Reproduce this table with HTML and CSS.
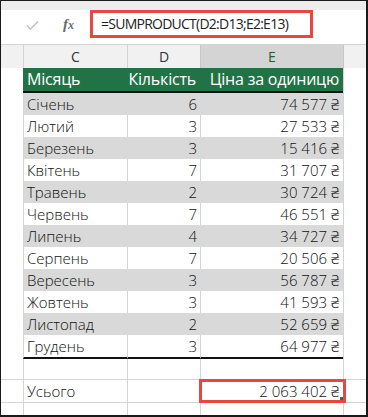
FILE: index.html
```html
<!DOCTYPE html>
<html lang="uk">
<head>
<meta charset="utf-8">
<title>SUMPRODUCT</title>
<link rel="stylesheet" href="styles.css">
</head>
<body>
<div class="sheet">
  <div class="topstrip"></div>
  <div class="fbar">
    <div class="btns">
      <svg class="check" width="13" height="10" viewBox="0 0 13 10"><path d="M1 5.5 L4.5 9 L12 1.5" fill="none" stroke="#c3c3c3" stroke-width="1.6"/></svg>
      <span class="fx">f<span class="x">x</span></span>
    </div>
    <div class="formula">=SUMPRODUCT(D2:D13;E2:E13)</div>
  </div>
  <div class="row colhead">
    <div class="c b"></div>
    <div class="c">C</div>
    <div class="c">D</div>
    <div class="c sel">E</div>
    <div class="c f"></div>
  </div>
  <div class="row thead">
    <div class="c b"></div>
    <div class="c g l">Місяць</div>
    <div class="c g r">Кількість</div>
    <div class="c g r">Ціна за одиницю</div>
    <div class="c f"></div>
  </div>
  <div class="rows">
    <div class="row d band"><div class="c b"></div><div class="c l">Січень</div><div class="c r">6</div><div class="c r">74 577 ₴</div><div class="c f"></div></div>
    <div class="row d"><div class="c b"></div><div class="c l">Лютий</div><div class="c r">3</div><div class="c r">27 533 ₴</div><div class="c f"></div></div>
    <div class="row d band"><div class="c b"></div><div class="c l">Березень</div><div class="c r">3</div><div class="c r">15 416 ₴</div><div class="c f"></div></div>
    <div class="row d"><div class="c b"></div><div class="c l">Квітень</div><div class="c r">7</div><div class="c r">31 707 ₴</div><div class="c f"></div></div>
    <div class="row d band"><div class="c b"></div><div class="c l">Травень</div><div class="c r">2</div><div class="c r">30 724 ₴</div><div class="c f"></div></div>
    <div class="row d"><div class="c b"></div><div class="c l">Червень</div><div class="c r">7</div><div class="c r">46 551 ₴</div><div class="c f"></div></div>
    <div class="row d band"><div class="c b"></div><div class="c l">Липень</div><div class="c r">4</div><div class="c r">34 727 ₴</div><div class="c f"></div></div>
    <div class="row d"><div class="c b"></div><div class="c l">Серпень</div><div class="c r">7</div><div class="c r">20 506 ₴</div><div class="c f"></div></div>
    <div class="row d band"><div class="c b"></div><div class="c l">Вересень</div><div class="c r">3</div><div class="c r">56 787 ₴</div><div class="c f"></div></div>
    <div class="row d"><div class="c b"></div><div class="c l">Жовтень</div><div class="c r">3</div><div class="c r">41 593 ₴</div><div class="c f"></div></div>
    <div class="row d band"><div class="c b"></div><div class="c l">Листопад</div><div class="c r">2</div><div class="c r">52 659 ₴</div><div class="c f"></div></div>
    <div class="row d last"><div class="c b"></div><div class="c l">Грудень</div><div class="c r">3</div><div class="c r">64 977 ₴</div><div class="c f"></div></div>
  </div>
  <div class="row e empty"><div class="c b"></div><div class="c"></div><div class="c"></div><div class="c"></div><div class="c f"></div></div>
  <div class="row e total"><div class="c b"></div><div class="c l">Усього</div><div class="c"></div><div class="c r picked">2 063 402 ₴<span class="handle"></span></div><div class="c f"></div></div>
  <div class="row e tail"><div class="c b"></div><div class="c"></div><div class="c"></div><div class="c"></div><div class="c f"></div></div>
</div>
</body>
</html>
```
FILE: styles.css
```css
html, body {
  margin: 0;
  padding: 0;
  background: #fff;
}
.sheet {
  width: 368px;
  height: 417px;
  box-sizing: border-box;
  border-top: 1px solid #1a1a1a;
  border-left: 1px solid #1a1a1a;
  border-right: 2px solid #1a1a1a;
  border-bottom: 2px solid #1a1a1a;
  overflow: hidden;
  font-family: "Open Sans", "Noto Sans", sans-serif;
  font-weight: 300;
  color: #111;
  display: flex;
  flex-direction: column;
}
.topstrip {
  height: 9px;
  background: #ededed;
}
.fbar {
  height: 35px;
  background: #fff;
  display: flex;
  align-items: flex-start;
  border-bottom: 1px solid #d4d4d4;
  box-sizing: border-box;
}
.btns {
  width: 89px;
  height: 34px;
  display: flex;
  align-items: center;
  padding-bottom: 6px;
  box-sizing: border-box;
}
.check {
  margin-left: 25px;
  margin-top: 2px;
}
.fx {
  margin-left: 24px;
  font-family: "Liberation Serif", serif;
  font-style: italic;
  font-weight: bold;
  font-size: 15px;
  color: #6a6a6a;
}
.fx .x {
  font-size: 12px;
}
.formula {
  width: 223px;
  height: 28px;
  box-sizing: border-box;
  border: 3px solid #e8473f;
  padding-left: 8px;
  font-size: 14px;
  font-weight: 400;
  line-height: 22px;
  letter-spacing: -0.75px;
  color: #222;
  white-space: nowrap;
}
.row {
  display: grid;
  grid-template-columns: 22px 104px 73px 143px 1fr;
}
.c {
  box-sizing: border-box;
  border-left: 1px solid #d4d4d4;
  white-space: nowrap;
  overflow: hidden;
}
.c.b {
  border-left: none;
}
.colhead {
  height: 23px;
  background: #f1f1f1;
}
.colhead .c {
  text-align: center;
  font-size: 14px;
  font-weight: 400;
  line-height: 23px;
  color: #333;
}
.colhead .c.sel {
  background: #d4d4d4;
  color: #1f5e3b;
  border-left-color: #c6c6c6;
}
.colhead .c.f {
  border-left-color: #c6c6c6;
}
.thead {
  height: 25px;
}
.thead .c.g {
  background: #217346;
  color: #fff;
  border-left: none;
  border-bottom: 2px solid #111;
  font-size: 16px;
  font-weight: 400;
  line-height: 23px;
  letter-spacing: -0.2px;
}
.thead .c.b, .thead .c.f {
  border-bottom: none;
}
.l {
  text-align: left;
  padding-left: 3px;
}
.thead .l {
  padding-left: 4px;
}
.r {
  text-align: right;
  padding-right: 4px;
}
.thead .r {
  padding-right: 4px;
}
.d {
  height: 22px;
}
.d .c {
  font-size: 15px;
  line-height: 22px;
}
.d .c.r:nth-child(3) {
  padding-right: 3px;
}
.band .c:nth-child(2), .band .c:nth-child(3), .band .c:nth-child(4) {
  background: #d9d9d9;
  border-left-color: #d9d9d9;
}
.band .c:nth-child(2) {
  border-left-color: #d4d4d4;
}
.last .c:nth-child(2), .last .c:nth-child(3), .last .c:nth-child(4) {
  border-bottom: 2px solid #111;
}
.last {
  height: 24px;
}
.last .c {
  line-height: 22px;
}
.e .c {
  border-bottom: 1px solid #d4d4d4;
  font-size: 15px;
}
.empty {
  height: 21px;
}
.total {
  height: 23px;
}
.total .c {
  line-height: 22px;
}
.tail {
  flex: 1;
}
.tail .c {
  border-bottom: none;
}
.picked {
  position: relative;
  overflow: visible;
}
.picked::after {
  content: "";
  position: absolute;
  left: -2px;
  right: -3px;
  top: -1px;
  bottom: -1px;
  border: 3px solid #e8473f;
}
.handle {
  position: absolute;
  right: 0;
  bottom: 2px;
  width: 3px;
  height: 3px;
  background: #217346;
  z-index: 2;
}
```
